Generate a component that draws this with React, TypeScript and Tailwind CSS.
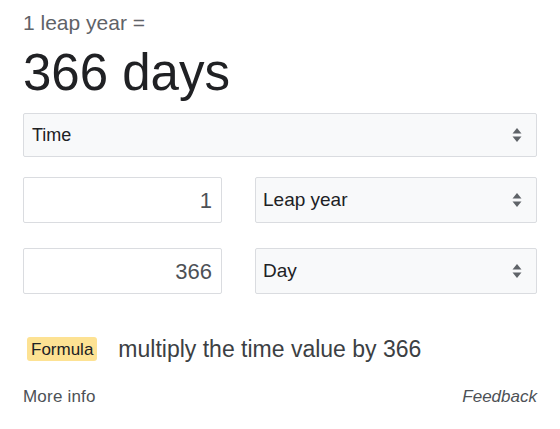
import React from "react";

const font = { fontFamily: '"Liberation Sans", Arial, sans-serif' };

function Arrows() {
    return (
        <svg width="10" height="16" viewBox="0 0 10 16" className="shrink-0">
            <path d="M5 1 L9.5 6.5 L0.5 6.5 Z" fill="#5f6368" />
            <path d="M5 15 L9.5 9.5 L0.5 9.5 Z" fill="#5f6368" />
        </svg>
    );
}

function SelectBox({ label }: { label: string }) {
    return (
        <div className="flex items-center justify-between h-[46px] border border-[#dadce0] bg-[#f8f9fa] rounded-[2px] pl-[7px] pr-[14px] text-[19px] text-[#202124]">
            <span>{label}</span>
            <Arrows />
        </div>
    );
}

function NumberBox({ value }: { value: string }) {
    return (
        <div className="flex items-center justify-end h-[46px] border border-[#dadce0] bg-white rounded-[2px] pr-[9px] text-[22px] text-[#4d5156]">
            {value}
        </div>
    );
}

export default function App() {
    return (
        <main className="w-[560px] h-[429px] bg-white px-[23px] pt-[9px]" style={font}>
            {/* header */}
            <div className="text-[21px] leading-[28px] text-[#5f6368]">1 leap year =</div>
            <div className="text-[51px] leading-[60px] text-[#202124] mt-[6px]">366 days</div>

            {/* unit type */}
            <div className="mt-[10px]">
                <div className="h-[44px] flex items-center justify-between border border-[#dadce0] bg-[#f8f9fa] rounded-[2px] pl-[8px] pr-[14px] text-[18px] text-[#202124]">
                    <span>Time</span>
                    <Arrows />
                </div>
            </div>

            {/* conversion rows */}
            <div className="mt-[20px] grid grid-cols-[199px_282px] gap-x-[33px] gap-y-[25px]">
                <NumberBox value="1" />
                <SelectBox label="Leap year" />
                <NumberBox value="366" />
                <SelectBox label="Day" />
            </div>

            {/* formula */}
            <div className="mt-[38px] flex items-center">
                <span className="ml-[4px] bg-[#fde293] rounded-[3px] px-[4px] h-[24px] flex items-center text-[17px] text-[#202124]">Formula</span>
                <span className="ml-[21px] text-[23px] text-[#3c4043]">multiply the time value by 366</span>
            </div>

            {/* footer */}
            <div className="mt-[17px] flex items-center justify-between text-[17px]">
                <span className="text-[#4d5156] tracking-[0.2px]">More info</span>
                <span className="italic text-[#4d5156]">Feedback</span>
            </div>
        </main>
    );
}
